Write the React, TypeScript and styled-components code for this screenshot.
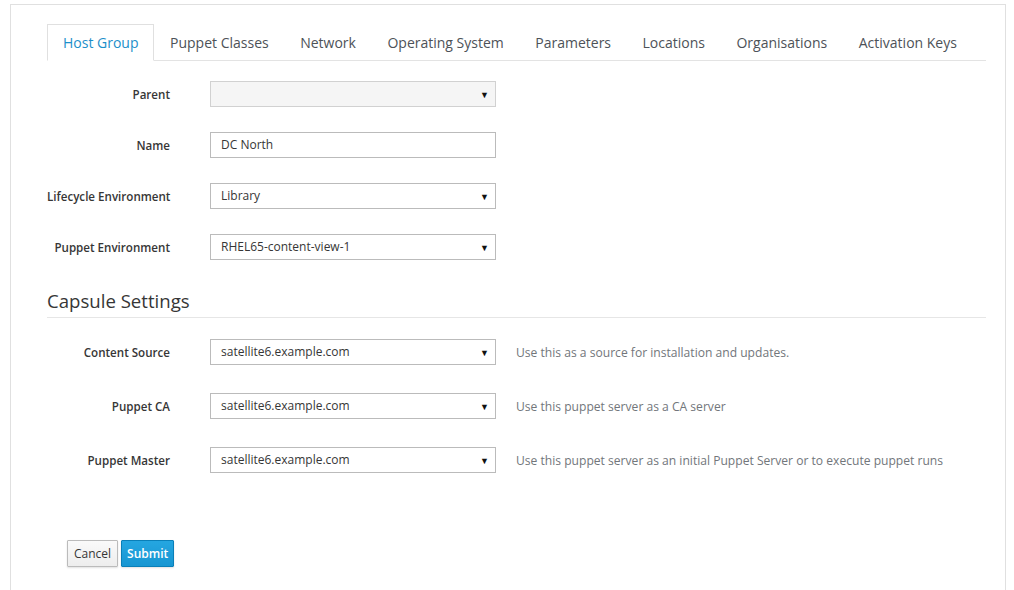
import React from "react";
import styled, { createGlobalStyle } from "styled-components";

const Global = createGlobalStyle`
  html, body { margin: 0; padding: 0; background: #fff; }
  body { font-family: "Open Sans", "Noto Sans", sans-serif; color: #363636; }
  * { box-sizing: border-box; }
`;

const Panel = styled.div`
  margin: 4px 8px 0 10px;
  width: 996px;
  height: 600px;
  border: 1px solid #e0e0e0;
  border-bottom: none;
  padding: 19px 19px 0 36px;
`;

const Tabs = styled.ul`
  display: flex;
  list-style: none;
  margin: 0;
  padding: 0;
  border-bottom: 1px solid #e3e3e3;
`;

const Tab = styled.li<{ $active?: boolean }>`
  height: 37px;
  margin-bottom: -1px;
  padding: 0 14.5px 0 15px;
  border: 1px solid ${(p) => (p.$active ? "#e0e0e0" : "transparent")};
  border-bottom-color: ${(p) => (p.$active ? "#fff" : "transparent")};
  background: ${(p) => (p.$active ? "#fff" : "transparent")};
  color: ${(p) => (p.$active ? "#1c8fca" : "#4d5258")};
  font-size: 14px;
  line-height: 35px;
  white-space: nowrap;
`;

const Form = styled.div`
  display: flex;
  flex-direction: column;
  padding-top: 20px;
`;

const Rows = styled.div<{ $gap: number }>`
  display: flex;
  flex-direction: column;
  gap: ${(p) => p.$gap}px;
`;

const Row = styled.div`
  display: flex;
  align-items: center;
  height: 26px;
`;

const Label = styled.div`
  width: 123px;
  text-align: right;
  font-size: 11.6px;
  font-weight: 600;
  color: #363636;
  margin-right: 40px;
  white-space: nowrap;
`;

const Field = styled.div<{ $disabled?: boolean }>`
  width: 286px;
  height: 26px;
  border: 1px solid #bbb;
  background: ${(p) => (p.$disabled ? "#f5f5f5" : "#fff")};
  border-color: ${(p) => (p.$disabled ? "#d1d1d1" : "#bbb")};
  font-size: 12px;
  line-height: 24px;
  padding: 0 6px 0 7px;
  color: #363636;
  display: flex;
  justify-content: space-between;
  align-items: center;
`;

const SelectValue = styled.span`
  padding-left: 3px;
`;

const Arrow = styled.span`
  font-size: 9px;
  color: #111;
  line-height: 1;
`;

const Help = styled.div`
  margin-left: 20px;
  font-size: 12.1px;
  color: #72767b;
  white-space: nowrap;
`;

const Heading = styled.h3`
  margin: 29px 0 21px;
  font-size: 18.6px;
  font-weight: 400;
  color: #363636;
  line-height: 24px;
  padding-bottom: 4px;
  border-bottom: 1px solid #e6e6e6;
`;

const Actions = styled.div`
  display: flex;
  gap: 3px;
  margin-top: 67px;
  padding-left: 20px;
`;

const Button = styled.button<{ $primary?: boolean }>`
  height: 27px;
  padding: 0 ${(p) => (p.$primary ? 5 : 6)}px;
  font-family: "Open Sans", "Noto Sans", sans-serif;
  font-size: 12px;
  font-weight: ${(p) => (p.$primary ? 600 : 400)};
  color: ${(p) => (p.$primary ? "#fff" : "#363636")};
  background: ${(p) =>
    p.$primary
      ? "linear-gradient(#25a6e1, #1796d2)"
      : "linear-gradient(#fafafa, #ededed)"};
  border: 1px solid ${(p) => (p.$primary ? "#0a7fb8" : "#bbb")};
  border-radius: 1px;
  box-shadow: 0 1px 2px rgba(0, 0, 0, 0.12);
`;

const tabs = [
  "Host Group",
  "Puppet Classes",
  "Network",
  "Operating System",
  "Parameters",
  "Locations",
  "Organisations",
  "Activation Keys",
];

type FieldRow = { label: string; value: string; select?: boolean; disabled?: boolean; help?: string };

const general: FieldRow[] = [
  { label: "Parent", value: "", select: true, disabled: true },
  { label: "Name", value: "DC North" },
  { label: "Lifecycle Environment", value: "Library", select: true },
  { label: "Puppet Environment", value: "RHEL65-content-view-1", select: true },
];

const capsule: FieldRow[] = [
  { label: "Content Source", value: "satellite6.example.com", select: true, help: "Use this as a source for installation and updates." },
  { label: "Puppet CA", value: "satellite6.example.com", select: true, help: "Use this puppet server as a CA server" },
  { label: "Puppet Master", value: "satellite6.example.com", select: true, help: "Use this puppet server as an initial Puppet Server or to execute puppet runs" },
];

function FormRow({ row }: { row: FieldRow }) {
  return (
    <Row>
      <Label>{row.label}</Label>
      <Field $disabled={row.disabled}>
        <SelectValue>{row.value}</SelectValue>
        {row.select && <Arrow>▼</Arrow>}
      </Field>
      {row.help && <Help>{row.help}</Help>}
    </Row>
  );
}

export default function App() {
  return (
    <>
      <Global />
      <Panel>
        <Tabs>
          {tabs.map((t, i) => (
            <Tab key={t} $active={i === 0}>
              {t}
            </Tab>
          ))}
        </Tabs>
        <Form>
          <Rows $gap={25}>
            {general.map((r) => (
              <FormRow key={r.label} row={r} />
            ))}
          </Rows>
          <Heading>Capsule Settings</Heading>
          <Rows $gap={28}>
            {capsule.map((r) => (
              <FormRow key={r.label} row={r} />
            ))}
          </Rows>
          <Actions>
            <Button>Cancel</Button>
            <Button $primary>Submit</Button>
          </Actions>
        </Form>
      </Panel>
    </>
  );
}
